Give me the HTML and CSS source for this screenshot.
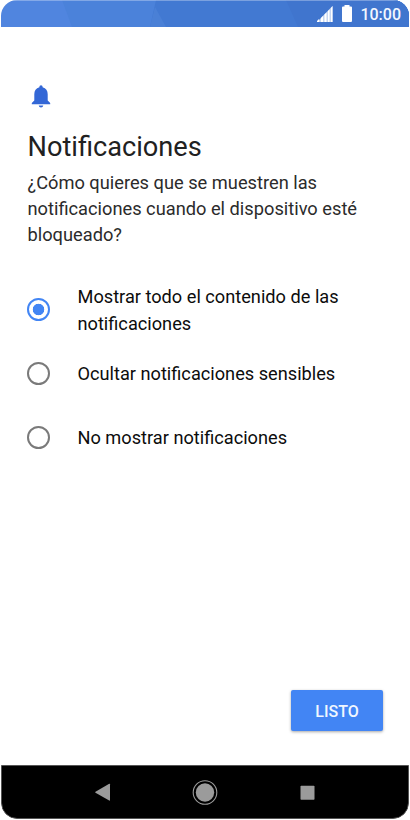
FILE: index.html
```html
<!DOCTYPE html>
<html lang="es">
<head>
<meta charset="utf-8">
<title>Notificaciones</title>
<link rel="stylesheet" href="styles.css">
</head>
<body>
<div class="phone">
  <header class="status">
    <svg class="facets" width="408" height="27" viewBox="1 0 408 27">
      <path fill="#4b82da" d="M62 0H410V27H72Z"/>
      <path fill="#4279d2" d="M156 0H410V27H150Z"/>
      <path fill="#4a80d6" d="M155 7L166 27H150Z"/>
      <path fill="#4075ce" d="M286 0H410V27H298Z"/>
      <path fill="#ffffff" fill-opacity=".3" d="M0 0H410V1H0Z"/>
    </svg>
    <svg class="signal" width="16" height="16" viewBox="0 0 16 16">
      <path fill="#fff" fill-opacity=".7" d="M0 16L15.5 0V16Z"/>
      <path fill="#fff" d="M0 16V15L2 13V16ZM4 16V12L6 10V16ZM7.5 16V8.5L9.5 6.5V16ZM11 16V5L12.5 3.5V16ZM14 16V2L15.5 0V16Z"/>
    </svg>
    <svg class="battery" width="10" height="17" viewBox="0 0 10 17"><path fill="#fff" d="M2.5 0H7.5V1.5H9Q10 1.5 10 2.5V16Q10 17 9 17H1Q0 17 0 16V2.5Q0 1.5 1 1.5H2.5Z"/></svg>
    <span class="clock">10:00</span>
  </header>
  <main class="content">
    <svg class="bell" width="20" height="24" viewBox="0 0 20 24">
      <path fill="#3367d6" d="M8.4 2.3V1.7Q8.4.2 10 .2T11.6 1.7V2.3C15 3.1 16.7 5.8 16.7 9.2V15.5L19.2 18V19.2H.8V18L3.3 15.5V9.2C3.3 5.8 5 3.1 8.4 2.3ZM7.7 20.4H12.3Q12 22.4 10 22.4T7.7 20.4Z"/>
    </svg>
    <h1 class="title">Notificaciones</h1>
    <p class="question">¿Cómo quieres que se muestren las<br>notificaciones cuando el dispositivo esté<br>bloqueado?</p>
    <div class="options">
      <div class="option selected"><span class="radio"></span><span class="label">Mostrar todo el contenido de las<br>notificaciones</span></div>
      <div class="option"><span class="radio"></span><span class="label">Ocultar notificaciones sensibles</span></div>
      <div class="option"><span class="radio"></span><span class="label">No mostrar notificaciones</span></div>
    </div>
    <button class="done">LISTO</button>
  </main>
  <nav class="navbar">
    <svg width="26" height="26" viewBox="0 0 26 26"><path fill="#9b9b9b" d="M5.5 12.8L19.2 4.8Q20 4.4 20 5.3V21.1Q20 22 19.2 21.6L5.5 13.8Q4.8 13.3 5.5 12.8Z"/></svg>
    <svg width="26" height="26" viewBox="0 0 26 26"><circle cx="13" cy="13.5" r="11.8" fill="none" stroke="#9b9b9b" stroke-width="1.1"/><circle cx="13" cy="13.5" r="9.2" fill="#9b9b9b"/></svg>
    <svg width="26" height="26" viewBox="0 0 26 26"><rect x="6.5" y="6.7" width="14" height="14" rx=".7" fill="#9b9b9b"/></svg>
  </nav>
</div>
</body>
</html>
```
FILE: styles.css
```css
* { box-sizing: border-box; }
body { margin: 0; background: #fff; font-family: Roboto, sans-serif; }
.phone {
  width: 408px;
  height: 819px;
  margin-left: 1px;
  border-radius: 16px;
  overflow: hidden;
  display: flex;
  flex-direction: column;
  background: #fff;
}
.status {
  position: relative;
  height: 27px;
  flex: none;
  display: flex;
  align-items: flex-start;
  justify-content: flex-end;
  padding-right: 8px;
  background: #5085df;
}
.facets { position: absolute; inset: 0; }
.signal, .battery, .clock { position: relative; }
.signal { margin-top: 6px; }
.battery { margin: 5px 8px 0 9px; }
.clock { margin-top: 5px; font-size: 16px; line-height: 19px; font-weight: 500; color: #f2f7ff; }
.content {
  flex: 1;
  display: flex;
  flex-direction: column;
  padding: 58px 26px 34px;
}
.bell { margin-left: 4px; }
.title { margin: 20px 0 0; font-size: 27.2px; line-height: 36px; font-weight: 400; color: #212121; }
.question { margin: 5px 0 0; font-size: 18.25px; line-height: 26px; color: #2b2b2b; white-space: nowrap; }
.title, .question { padding-left: .5px; }
.options { margin-top: 35px; }
.option { display: flex; align-items: center; height: 64px; }
.option.selected { height: 54px; margin-bottom: 4px; }
.radio {
  width: 23px;
  height: 23px;
  margin-right: 27.5px;
  flex: none;
  border: 2px solid #7a7a7a;
  border-radius: 50%;
}
.selected .radio {
  position: relative;
  top: -1px;
  border-color: #4285f4;
  background: radial-gradient(circle, #4285f4 5.4px, transparent 6.1px);
}
.label { font-size: 18.2px; line-height: 27px; color: #0c0c0c; white-space: nowrap; }
.done {
  align-self: flex-end;
  margin-top: auto;
  width: 92px;
  height: 41px;
  border: 0;
  border-radius: 2px;
  padding: 2px 0 0;
  background: #4285f4;
  color: #f0f7ff;
  font: 500 16px Roboto, sans-serif;
  box-shadow: 0 1px 3px rgba(0, 0, 0, .35);
}
.navbar {
  flex: none;
  height: 54px;
  display: flex;
  align-items: center;
  justify-content: center;
  gap: 76px;
  background: #000;
  border: 1px solid #555;
  border-radius: 0 0 16px 16px;
}
```
